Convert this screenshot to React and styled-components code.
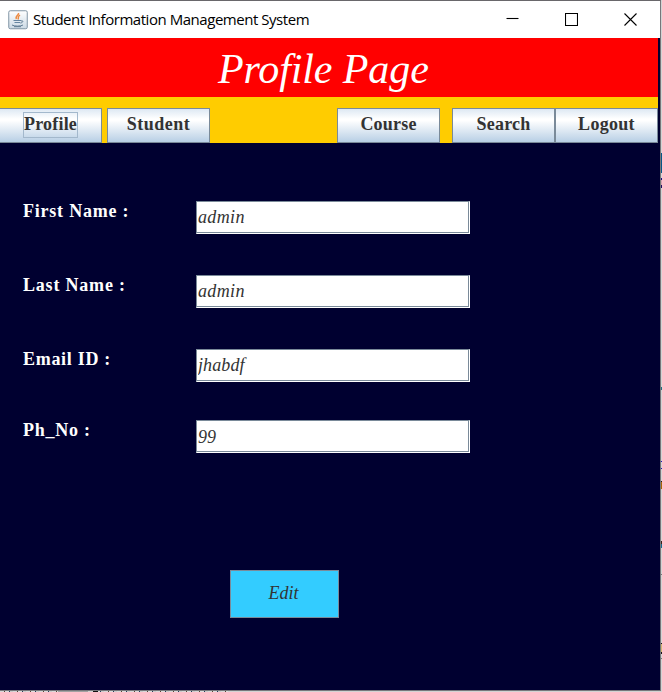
import React from "react";
import styled, { createGlobalStyle } from "styled-components";

const GlobalStyle = createGlobalStyle`
  * { box-sizing: border-box; }
  body { margin: 0; background: #d3d3d3; overflow: hidden; }
`;

const Desktop = styled.div`
  width: 662px;
  height: 692px;
  display: grid;
  grid-template-columns: 661px 1px;
  grid-template-rows: 691px 1px;
  background: #d3d3d3;
`;

const Window = styled.main`
  display: flex;
  flex-direction: column;
  background: #000030;
  border: solid #77777b;
  border-width: 1px 1px 1px 0;
  border-top-color: #69676b;
  font-family: "Liberation Serif", "Times New Roman", serif;
`;

const RightEdge = styled.div`
  background: linear-gradient(
    #d3d3d3 153px, #075887 153px 173px, #d3d3d3 173px 178px, #160b80 178px 180px,
    #d6a8b0 180px 185px, #201060 185px 188px, #d3d3d3 188px 387px, #207080 387px 390px,
    #d3d3d3 390px 461px, #2018b0 461px 462px, #d3d3d3 462px 468px, #2018b0 468px 469px,
    #d3d3d3 469px 481px, #201820 481px 482px, #a86408 482px 489px, #d3d3d3 489px 541px,
    #3c2018 541px 544px, #176d91 544px 548px, #d3d3d3 548px 574px, #777 574px 575px,
    #d3d3d3 575px 643px, #181018 643px 644px, #d4b773 644px 652px, #181018 652px 654px,
    #d3d3d3 654px 658px, #777 658px 659px, #d3d3d3 659px
  );
`;

const BottomEdge = styled.div`
  background:
    linear-gradient(90deg, transparent 228px, #d3d3d3 228px),
    linear-gradient(90deg, transparent 58px, #a2a2a2 58px 88px, #d3d3d3 88px 93px, #111 93px 98px, transparent 98px),
    repeating-linear-gradient(90deg, #d8d8d8 0 4px, #574536 4px 5px, #ddd 5px 9px, #263c59 9px 10px, #ccc 10px 13px);
`;

const TitleBar = styled.header`
  height: 37px;
  padding-left: 8px;
  display: flex;
  align-items: center;
  background: #fff;
`;

const WindowTitle = styled.span`
  margin-left: 5px;
  padding-bottom: 1px;
  font: 15px/20px "Open Sans", "Noto Sans", sans-serif;
  letter-spacing: -0.46px;
  color: #000;
  white-space: nowrap;
`;

const Controls = styled.div`
  display: flex;
  gap: 46px;
  margin-left: auto;
  margin-right: 23px;
`;

const Banner = styled.h1`
  width: 658px;
  height: 59px;
  margin: 0;
  padding-left: 218px;
  background: #f00;
  color: #fff;
  font-size: 42px;
  line-height: 62px;
  font-weight: 400;
  font-style: italic;
  letter-spacing: -0.1px;
  white-space: nowrap;
`;

const Nav = styled.nav`
  width: 658px;
  height: 46px;
  padding-top: 11px;
  display: flex;
  background: #fc0;
`;

const NavButton = styled.button`
  width: ${({ $width }) => $width || 103}px;
  height: 35px;
  margin: 0 0 0 ${({ $gap }) => $gap || 0}px;
  padding: 0 0 ${({ $flush }) => ($flush ? 2 : 3)}px;
  display: flex;
  align-items: center;
  justify-content: center;
  border: 1px solid #7a8a99;
  border-left-width: ${({ $flush }) => ($flush ? 0 : 1)}px;
  background: linear-gradient(#dde8f3 0%, #fff 30%, #fff 35%, #b8cfe5 100%);
  color: #333;
  font: bold 18px/22px "Liberation Serif", serif;
  letter-spacing: ${({ $spacing }) => $spacing || 0}px;
`;

const FocusText = styled.span`
  width: 55px;
  height: 26px;
  line-height: 25px;
  border: 1px solid #a3b8cc;
  display: flex;
  justify-content: center;
  align-items: center;
`;

const Form = styled.form`
  padding-top: 58px;
  display: grid;
  grid-template-columns: 173px 274px;
  grid-template-rows: 74px 74px 71px 150px;
  margin-left: 23px;
`;

const Label = styled.label`
  height: 22px;
  color: #fff;
  font-weight: 700;
  font-size: 18px;
  line-height: 20px;
  letter-spacing: ${({ $spacing }) => $spacing}px;
  white-space: nowrap;
`;

const FieldFrame = styled.div`
  height: 33px;
  border: solid;
  border-width: 1px;
  border-color: #7a8a99 #fff #fff #7a8a99;
  background: #fff;
`;

const Field = styled.input`
  display: block;
  width: 100%;
  height: 31px;
  padding: ${({ $drop }) => $drop || 0}px 0 0 1px;
  border: solid #7a8a99;
  border-width: 0 1px 1px 0;
  border-radius: 0;
  outline: 0;
  background: #fff;
  color: #333;
  font: italic 18px/24px "Liberation Serif", serif;
  letter-spacing: ${({ $spacing }) => $spacing}px;
`;

const EditButton = styled.button`
  grid-column: 2;
  margin: 0 0 0 34px;
  width: 109px;
  height: 48px;
  padding: 0 2px 2px 0;
  border: 1px solid #7a8a99;
  background: #3cf;
  color: #333;
  font: italic 18px/24px "Liberation Serif", serif;
`;

const JavaIcon = () => (
  <svg width="20" height="20" viewBox="0 0 20 20" fill="none">
    <defs>
      <linearGradient id="tile" x2="0" y2="1">
        <stop stopColor="#fff" />
        <stop offset="1" stopColor="#cbd9e4" />
      </linearGradient>
    </defs>
    <rect x=".75" y=".75" width="18.5" height="18" rx="1.5" fill="url(#tile)" stroke="#8195a5" />
    <path d="M10.500 3c1 2-4 3-2 6M12 5c-3 2-1 2.500-2 4.500" stroke="#ed8b43" strokeWidth="1.500" />
    <path d="M5.500 10.500h7.500M6.500 12.500h5.500" stroke="#6685a0" />
    <path d="M13 11c3-1 2 2-.7 2M4 15c2 1.500 9 1.500 11 0M6 16.700h7" stroke="#5e7b93" />
  </svg>
);

const Glyph = ({ d }) => (
  <svg width="13" height="13" viewBox="0 0 13 13" fill="none" stroke="#000" strokeWidth="1.100">
    <path d={d} />
  </svg>
);

const fields = [
  { id: "first", label: "First Name :", value: "admin", spacing: 0.78, inputSpacing: 0.35 },
  { id: "last", label: "Last Name :", value: "admin", spacing: 0.8, inputSpacing: 0.35 },
  { id: "email", label: "Email ID :", value: "jhabdf", spacing: 0.7, inputSpacing: 0.1 },
  { id: "phone", label: "Ph_No :", value: "99", spacing: 0.75, inputSpacing: 0, drop: 2 },
];

export default function App() {
  return (
    <>
      <GlobalStyle />
      <Desktop>
        <Window>
          <TitleBar>
            <JavaIcon />
            <WindowTitle>Student Information Management System</WindowTitle>
            <Controls>
              <Glyph d="M.5 5.500h12" />
              <Glyph d="M.5.500h12v12H.5z" />
              <Glyph d="M.5.500l12 12m0-12l-12 12" />
            </Controls>
          </TitleBar>
          <Banner>Profile Page</Banner>
          <Nav>
            <NavButton $width={102} $flush $spacing={0.2}><FocusText>Profile</FocusText></NavButton>
            <NavButton $gap={5} $spacing={0.5}>Student</NavButton>
            <NavButton $gap={127} $spacing={0.2}>Course</NavButton>
            <NavButton $gap={12} $spacing={0.2}>Search</NavButton>
            <NavButton $spacing={0.3}>Logout</NavButton>
          </Nav>
          <Form onSubmit={(event) => event.preventDefault()}>
            {fields.map(({ id, label, value, spacing, inputSpacing, drop }) => (
              <React.Fragment key={id}>
                <Label htmlFor={id} $spacing={spacing}>{label}</Label>
                <FieldFrame>
                  <Field id={id} defaultValue={value} $spacing={inputSpacing} $drop={drop} />
                </FieldFrame>
              </React.Fragment>
            ))}
            <EditButton type="button">Edit</EditButton>
          </Form>
        </Window>
        <RightEdge />
        <BottomEdge />
      </Desktop>
    </>
  );
}
